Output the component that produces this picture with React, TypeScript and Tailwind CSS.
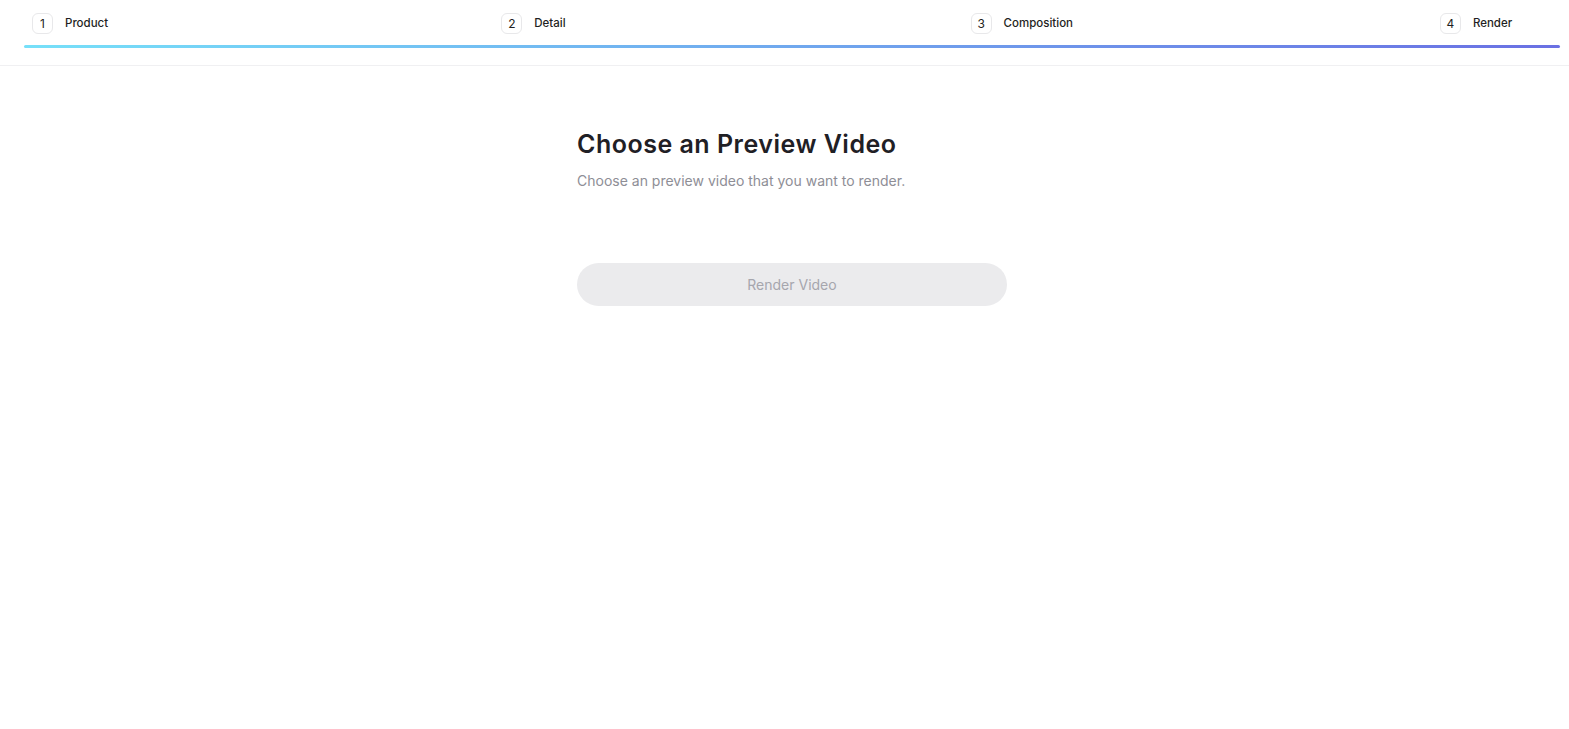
import React from "react";

const steps = ["Product", "Detail", "Composition", "Render"];

export default function App() {
  return (
    <div className="min-h-screen bg-white" style={{ fontFamily: "Inter, 'Noto Sans', sans-serif" }}>
      <header className="border-b border-[#f0f0f2] h-[66px] pt-[13px]">
        <div className="flex pl-[32px]">
          {steps.map((s, i) => (
            <div key={s} className={`flex items-center gap-[12px] ${i < 3 ? "w-[469.3px]" : ""}`}>
              <div className="w-[21px] h-[21px] rounded-[6px] border border-[#e8e8ea] flex items-center justify-center text-[12px] text-[#1f1f23] pt-[1px]">
                {i + 1}
              </div>
              <span className="text-[11.5px] font-medium text-[#1f1f23] mt-[1px]">{s}</span>
            </div>
          ))}
        </div>
        <div className="ml-[24px] mr-[9px] mt-[11px] h-[3px] rounded-full bg-[linear-gradient(to_right,#76e0f9,#6a70e3)]" />
      </header>
      <main className="w-[445px] mx-auto pl-[15px] pt-[62px]">
        <h1 className="text-[25px] leading-[32px] font-semibold text-[#1f2025] tracking-[0.5px]">Choose an Preview Video</h1>
        <p className="mt-[11px] text-[14px] leading-[20px] text-[#8e8e96]">Choose an preview video that you want to render.</p>
        <button
          disabled
          className="mt-[72px] w-[430px] h-[43px] rounded-full bg-[#ebebed] text-[14px] text-[#a6a6ad] flex items-center justify-center"
        >
          Render Video
        </button>
      </main>
    </div>
  );
}
